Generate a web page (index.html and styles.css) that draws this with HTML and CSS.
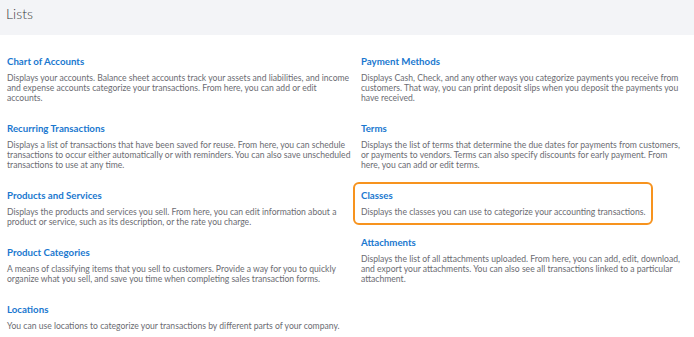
FILE: index.html
```html
<!DOCTYPE html>
<html lang="en">
<head>
    <meta charset="UTF-8">
    <meta name="viewport" content="width=device-width, initial-scale=1.0">
    <title>Lists</title>
    <link rel="stylesheet" href="styles.css">
</head>
<body>
    <div class="page-header">
        <h1>Lists</h1>
    </div>

    <div class="lists-grid">
        <div class="lists-column">
            <div class="list-item">
                <a href="#" class="list-title">Chart of Accounts</a>
                <p>Displays your accounts. Balance sheet accounts track your assets and liabilities, and income and expense accounts categorize your transactions. From here, you can add or edit accounts.</p>
            </div>
            <div class="list-item">
                <a href="#" class="list-title">Recurring Transactions</a>
                <p>Displays a list of transactions that have been saved for reuse. From here, you can schedule transactions to occur either automatically or with reminders. You can also save unscheduled transactions to use at any time.</p>
            </div>
            <div class="list-item">
                <a href="#" class="list-title">Products and Services</a>
                <p>Displays the products and services you sell. From here, you can edit information about a product or service, such as its description, or the rate you charge.</p>
            </div>
            <div class="list-item">
                <a href="#" class="list-title">Product Categories</a>
                <p>A means of classifying items that you sell to customers. Provide a way for you to quickly organize what you sell, and save you time when completing sales transaction forms.</p>
            </div>
            <div class="list-item">
                <a href="#" class="list-title">Locations</a>
                <p>You can use locations to categorize your transactions by different parts of your company.</p>
            </div>
        </div>

        <div class="lists-column right">
            <div class="list-item">
                <a href="#" class="list-title">Payment Methods</a>
                <p>Displays Cash, Check, and any other ways you categorize payments you receive from customers. That way, you can print deposit slips when you deposit the payments you have received.</p>
            </div>
            <div class="list-item">
                <a href="#" class="list-title">Terms</a>
                <p>Displays the list of terms that determine the due dates for payments from customers, or payments to vendors. Terms can also specify discounts for early payment. From here, you can add or edit terms.</p>
            </div>
            <div class="list-item highlight">
                <a href="#" class="list-title">Classes</a>
                <p>Displays the classes you can use to categorize your accounting transactions.</p>
            </div>
            <div class="list-item">
                <a href="#" class="list-title">Attachments</a>
                <p>Displays the list of all attachments uploaded. From here, you can add, edit, download, and export your attachments. You can also see all transactions linked to a particular attachment.</p>
            </div>
        </div>
    </div>
</body>
</html>
```

FILE: styles.css
```css
body {
    margin: 0;
    padding: 0;
    background-color: #ffffff;
    font-family: Lato, "Open Sans", Arial, sans-serif;
    color: #393a3d;
}

.page-header {
    background-color: #f3f4f7;
    height: 35px;
    padding: 0 6px;
    display: flex;
    align-items: center;
}

.page-header h1 {
    margin: 0;
    font-size: 14px;
    font-weight: 300;
    color: #393a3d;
    position: relative;
    top: -4px;
}

.lists-grid {
    display: grid;
    grid-template-columns: 346px 326px;
    column-gap: 8px;
    padding: 20px 7px 0;
}

.lists-column {
    display: flex;
    flex-direction: column;
    gap: 19px;
}

.list-item {
    display: flex;
    flex-direction: column;
    gap: 6px;
}

.list-title {
    color: #1a78cf;
    font-size: 9.7px;
    font-weight: 700;
    line-height: 12px;
    text-decoration: none;
}

.list-item p {
    margin: 0;
    font-size: 8.6px;
    line-height: 10px;
    color: #6b6c72;
}

.list-item.highlight {
    align-self: flex-start;
    margin: -7px 0 -8px -8px;
    padding: 5px 6px 6px 6px;
    border: 2px solid #f7931e;
    border-radius: 6px;
}
```
